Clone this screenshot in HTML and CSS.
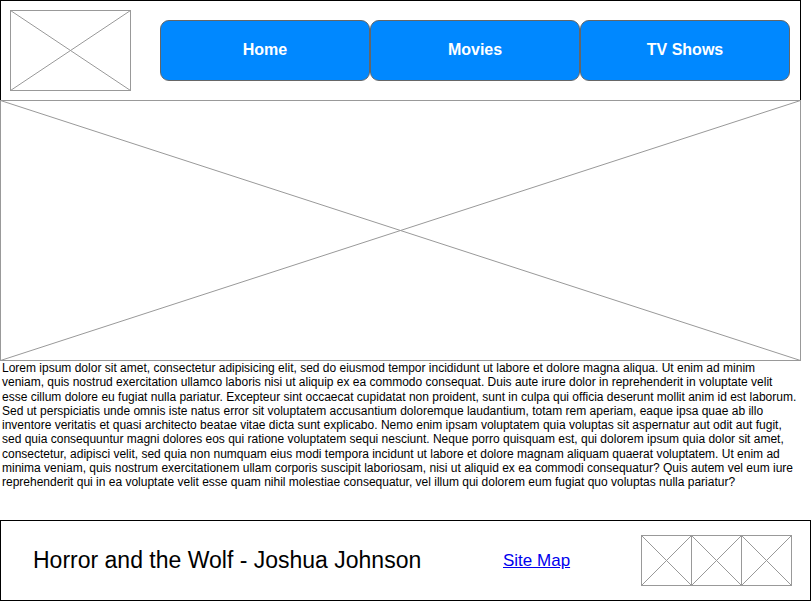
FILE: index.html
```html
<!DOCTYPE html>
<html>
<head>
<meta charset="utf-8">
<link rel="stylesheet" href="styles.css">
</head>
<body>
<header class="header">
  <div class="logo">
    <svg class="xbox" viewBox="0 0 121 81" preserveAspectRatio="none"><rect x="0.5" y="0.5" width="120" height="80" fill="#fff" stroke="#999"/><line x1="0.5" y1="0.5" x2="120.5" y2="80.5" stroke="#999"/><line x1="120.5" y1="0.5" x2="0.5" y2="80.5" stroke="#999"/></svg>
  </div>
  <nav class="nav">
    <a class="btn">Home</a>
    <a class="btn">Movies</a>
    <a class="btn">TV Shows</a>
  </nav>
</header>
<div class="hero">
  <svg class="xbox" viewBox="0 0 801 261" preserveAspectRatio="none"><rect x="0.5" y="0.5" width="800" height="260" fill="#fff" stroke="#999"/><line x1="0.5" y1="0.5" x2="800.5" y2="260.5" stroke="#999"/><line x1="800.5" y1="0.5" x2="0.5" y2="260.5" stroke="#999"/></svg>
</div>
<main class="content">
  <p class="lorem">Lorem ipsum dolor sit amet, consectetur adipisicing elit, sed do eiusmod tempor incididunt ut labore et dolore magna aliqua. Ut enim ad minim veniam, quis nostrud exercitation ullamco laboris nisi ut aliquip ex ea commodo consequat. Duis aute irure dolor in reprehenderit in voluptate velit esse cillum dolore eu fugiat nulla pariatur. Excepteur sint occaecat cupidatat non proident, sunt in culpa qui officia deserunt mollit anim id est laborum. Sed ut perspiciatis unde omnis iste natus error sit voluptatem accusantium doloremque laudantium, totam rem aperiam, eaque ipsa quae ab illo inventore veritatis et quasi architecto beatae vitae dicta sunt explicabo. Nemo enim ipsam voluptatem quia voluptas sit aspernatur aut odit aut fugit, sed quia consequuntur magni dolores eos qui ratione voluptatem sequi nesciunt. Neque porro quisquam est, qui dolorem ipsum quia dolor sit amet, consectetur, adipisci velit, sed quia non numquam eius modi tempora incidunt ut labore et dolore magnam aliquam quaerat voluptatem. Ut enim ad minima veniam, quis nostrum exercitationem ullam corporis suscipit laboriosam, nisi ut aliquid ex ea commodi consequatur? Quis autem vel eum iure reprehenderit qui in ea voluptate velit esse quam nihil molestiae consequatur, vel illum qui dolorem eum fugiat quo voluptas nulla pariatur?</p>
</main>
<footer class="footer">
  <div class="footer-title">Horror and the Wolf - Joshua Johnson</div>
  <a class="sitemap" href="#">Site Map</a>
  <div class="thumbs">
    <svg class="thumb" viewBox="0 0 51 51"><rect x="0.5" y="0.5" width="50" height="50" fill="#fff" stroke="#999"/><line x1="0.5" y1="0.5" x2="50.5" y2="50.5" stroke="#999"/><line x1="50.5" y1="0.5" x2="0.5" y2="50.5" stroke="#999"/></svg>
    <svg class="thumb" viewBox="0 0 51 51"><rect x="0.5" y="0.5" width="50" height="50" fill="#fff" stroke="#999"/><line x1="0.5" y1="0.5" x2="50.5" y2="50.5" stroke="#999"/><line x1="50.5" y1="0.5" x2="0.5" y2="50.5" stroke="#999"/></svg>
    <svg class="thumb" viewBox="0 0 51 51"><rect x="0.5" y="0.5" width="50" height="50" fill="#fff" stroke="#999"/><line x1="0.5" y1="0.5" x2="50.5" y2="50.5" stroke="#999"/><line x1="50.5" y1="0.5" x2="0.5" y2="50.5" stroke="#999"/></svg>
  </div>
</footer>
</body>
</html>
```

FILE: styles.css
```css
* { box-sizing: border-box; }
html, body { margin: 0; padding: 0; background: #fff; }
body {
  width: 811px;
  font-family: "Liberation Sans", Arial, Helvetica, sans-serif;
  color: #000;
}
.header {
  width: 801px;
  height: 100px;
  border: 1px solid #000;
  border-bottom: none;
  display: flex;
  align-items: flex-start;
  padding: 9px 0 0 9px;
}
.logo { width: 121px; height: 81px; }
.xbox { display: block; width: 100%; height: 100%; }
.nav {
  display: flex;
  margin-left: 29px;
  margin-top: 10px;
}
.btn {
  width: 210px;
  height: 61px;
  background: #0088ff;
  border: 1px solid #666;
  border-radius: 9px;
  color: #fff;
  font-weight: bold;
  font-size: 16px;
  display: flex;
  align-items: center;
  justify-content: center;
  padding-bottom: 2px;
}
.hero { width: 801px; height: 261px; }
.content {
  height: 159px;
  width: 800px;
  padding: 0 0 0 2px;
}
.lorem {
  margin: 0;
  font-size: 12px;
  line-height: 14.3px;
}
.footer {
  width: 811px;
  height: 81px;
  border: 1px solid #000;
  display: flex;
  align-items: center;
  padding-left: 32px;
}
.footer-title {
  font-size: 23px;
  width: 470px;
}
.sitemap {
  color: #0000ee;
  font-size: 17px;
  text-decoration: underline;
  width: 138px;
}
.thumbs { display: flex; }
.thumb { display: block; width: 51px; height: 51px; margin-right: -1px; }
```
